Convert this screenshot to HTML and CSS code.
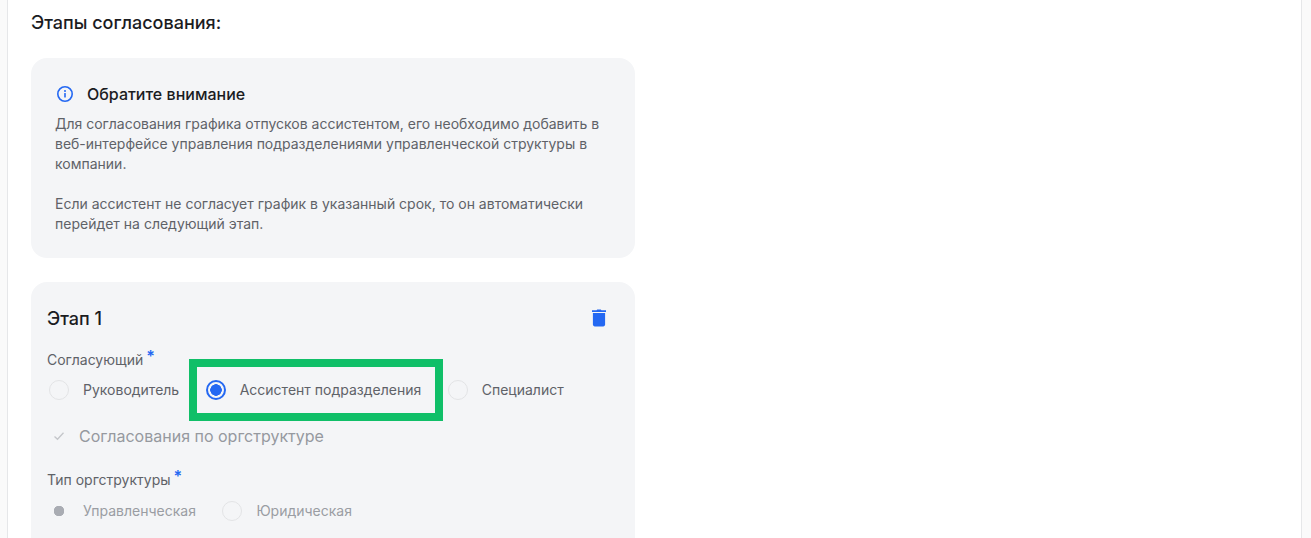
FILE: index.html
```html
<!DOCTYPE html>
<html lang="en">
<head>
  <meta charset="UTF-8">
  <title>Этапы согласования</title>
  <link rel="stylesheet" href="styles.css">
</head>
<body>
  <div class="page">
    <h2 class="title">Этапы согласования:</h2>

    <div class="note">
      <div class="note-head">
        <svg class="note-icon" width="18" height="18" viewBox="0 0 18 18" fill="none">
          <circle cx="9" cy="9" r="7.2" stroke="#2468f2" stroke-width="1.6"/>
          <rect x="8.2" y="8" width="1.6" height="4.6" rx=".5" fill="#2468f2"/>
          <circle cx="9" cy="5.9" r="1" fill="#2468f2"/>
        </svg>
        <span>Обратите внимание</span>
      </div>
      <p>Для согласования графика отпусков ассистентом, его необходимо добавить в веб-интерфейсе управления подразделениями управленческой структуры в компании.</p>
      <p>Если ассистент не согласует график в указанный срок, то он автоматически перейдет на следующий этап.</p>
    </div>

    <div class="stage">
      <div class="stage-head">
        <h3>Этап 1</h3>
        <svg class="trash" width="16" height="18" viewBox="0 0 16 18" fill="#2468f2">
          <path d="M5.6 1.2 6.2.4h3.6l.6.8H15v1.700H1V1.200z"/>
          <path d="M1.900 4h12.200v11.600c0 1.100-.8 1.900-1.900 1.900H3.800c-1.100 0-1.900-.8-1.900-1.900z"/>
        </svg>
      </div>

      <div class="field-label">Согласующий<sup>*</sup></div>
      <div class="radios">
        <label class="radio"><i class="dot"></i>Руководитель</label>
        <label class="radio radio-on"><i class="dot"></i>Ассистент подразделения</label>
        <label class="radio"><i class="dot"></i>Специалист</label>
        <div class="highlight"></div>
      </div>

      <div class="check">
        <svg width="14" height="14" viewBox="0 0 14 14" fill="none">
          <path d="M2.500 7.500 5.500 10.300 11.500 3.800" stroke="#c4c6ca" stroke-width="1.300"/>
        </svg>
        Согласования по оргструктуре
      </div>

      <div class="field-label">Тип оргструктуры<sup>*</sup></div>
      <div class="radios radios-off">
        <label class="radio radio-mark"><i class="dot"></i>Управленческая</label>
        <label class="radio"><i class="dot"></i>Юридическая</label>
      </div>
    </div>
  </div>
</body>
</html>
```

FILE: styles.css
```css
body {
  margin: 0;
  background: #fafafa;
  font-family: Inter, "Noto Sans", sans-serif;
  color: #1b1c1f;
}

.page {
  margin: 0 9px 0 7px;
  height: 538px;
  box-sizing: border-box;
  padding: 12px 23px 0;
  background: #fff;
  border: solid #e6e7e9;
  border-width: 0 1px;
  overflow: hidden;
}

.title {
  margin: 0 0 24px;
  font-size: 18px;
  line-height: 22px;
  font-weight: 500;
}

.note, .stage {
  width: 604px;
  box-sizing: border-box;
  background: #f4f5f7;
  border-radius: 16px;
}

.note {
  height: 200px;
  padding: 26px 24px 0;
  margin-bottom: 24px;
}

.note-head {
  display: flex;
  align-items: center;
  gap: 13px;
  padding-left: 1px;
  font-size: 16px;
  line-height: 20px;
  font-weight: 500;
  margin-bottom: 10px;
}

.note p {
  margin: 0 0 20px;
  font-size: 14px;
  line-height: 20px;
  color: #5f6268;
}

.stage {
  height: 300px;
  padding: 25px 16px 0;
}

.stage-head {
  display: flex;
  justify-content: space-between;
  align-items: center;
  padding-right: 12px;
  margin-bottom: 19px;
}

.stage-head h3 {
  margin: 0;
  font-size: 18px;
  line-height: 24px;
  font-weight: 500;
}

.trash {
  margin-bottom: 2px;
}

.field-label {
  font-size: 14px;
  line-height: 20px;
  color: #5f6268;
}

.field-label sup {
  color: #2468f2;
  font-size: 16px;
  font-weight: 600;
  line-height: 0;
  margin-left: 3px;
  vertical-align: 3px;
}

.radios {
  position: relative;
  display: flex;
  height: 20px;
  margin-top: 10px;
}

.radios-off {
  margin-top: 11px;
}

.radio {
  display: flex;
  align-items: center;
  gap: 14px;
  margin-left: 2px;
  margin-right: 24.500px;
  font-size: 14px;
  line-height: 20px;
  color: #5f6268;
}

.dot {
  width: 20px;
  height: 20px;
  box-sizing: border-box;
  border: 1.500px solid #e3e4e6;
  border-radius: 50%;
}

.radio-on .dot {
  border: 2px solid #2468f2;
  background: radial-gradient(circle, #2468f2 0 5.500px, transparent 6px);
}

.radios-off .radio {
  color: #9a9da3;
}

.radio-mark .dot {
  border: 0;
  background: radial-gradient(circle, #a9acb3 0 5px, transparent 5.500px);
}

/* annotation frame from the screenshot */
.highlight {
  position: absolute;
  left: 142px;
  top: -21px;
  width: 254px;
  height: 62px;
  box-sizing: border-box;
  border: 8px solid #10bf68;
}

.check {
  display: flex;
  align-items: center;
  gap: 13px;
  margin: 26px 0 24px 5px;
  font-size: 16px;
  line-height: 20px;
  color: #96999f;
}
```
